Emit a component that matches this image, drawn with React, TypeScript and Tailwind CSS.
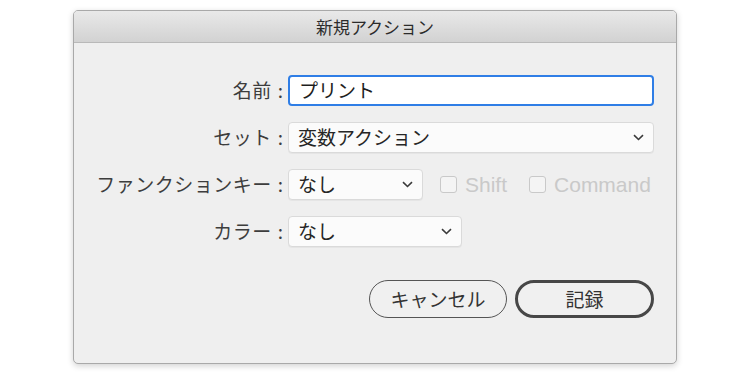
import React from "react";

const jp = "font-['Hiragino_Kaku_Gothic_ProN','Noto_Sans_CJK_JP',sans-serif]";

function Chevron() {
  return (
    <svg width="11" height="7" viewBox="0 0 11 7" className="shrink-0">
      <path d="M1 1.2 L5.5 5.5 L10 1.2" fill="none" stroke="#3a3a3a" strokeWidth="1.6" />
    </svg>
  );
}

function Select({ value, width }: { value: string; width: string }) {
  return (
    <div
      className={`${width} h-[31px] flex items-center justify-between pl-[9px] pr-[9px] bg-[#fbfbfb] border border-[#dadada] rounded-[4px] shadow-[0_1px_0_rgba(0,0,0,0.04)] text-[#262626]`}
    >
      <span>{value}</span>
      <Chevron />
    </div>
  );
}

function Row({ label, children }: { label: string; children: React.ReactNode }) {
  return (
    <div className="flex items-center">
      <div className="w-[214px] shrink-0 flex justify-end text-[#3d3d3d] pr-[5px] whitespace-nowrap">
        <span className="tracking-[0.5px]">{label}</span>
        <span className="ml-[6px]">:</span>
      </div>
      {children}
    </div>
  );
}

function Check({ label }: { label: string }) {
  return (
    <div className="flex items-center gap-[8px]">
      <div className="w-[17px] h-[17px] rounded-[3px] border border-[#c9c9c9] bg-[#f4f4f4]" />
      <span className="font-['Liberation_Sans',sans-serif] text-[21px] text-[#c9c9c9] leading-none">{label}</span>
    </div>
  );
}

export default function App() {
  return (
    <div className="w-[750px] h-[374px] bg-white pt-[10px]">
      <div className="mx-auto w-[604px] h-[354px] flex flex-col bg-[#efefef] border border-[#a9a9a9] rounded-[5px] shadow-[0_2px_6px_rgba(0,0,0,0.18)] overflow-hidden">
        {/* Title bar */}
        <div className={`${jp} h-[32px] shrink-0 flex items-center justify-center bg-gradient-to-b from-[#e9e9e9] to-[#d2d2d2] border-b border-[#b9b9b9] text-[17px] text-[#2b2b2b]`}>
          新規アクション
        </div>

        {/* Body */}
        <div className={`${jp} flex flex-col pt-[32px] pr-[22px] text-[19px]`}>
          <div className="flex flex-col gap-[16px]">
            <Row label="名前">
              <div className="flex-1 h-[31px] flex items-center pl-[9px] bg-white border-2 border-[#2f7ee6] rounded-[4px] text-[#1e1e1e]">
                プリント
              </div>
            </Row>
            <Row label="セット">
              <Select value="変数アクション" width="flex-1" />
            </Row>
            <Row label="ファンクションキー">
              <Select value="なし" width="w-[135px]" />
              <div className="flex items-center gap-[22px] ml-[17px]">
                <Check label="Shift" />
                <Check label="Command" />
              </div>
            </Row>
            <Row label="カラー">
              <Select value="なし" width="w-[174px]" />
            </Row>
          </div>

          <div className="flex justify-end gap-[8px] mt-[33px]">
            <button className="w-[138px] h-[38px] rounded-full border-[1.5px] border-[#555] bg-[#f0f0f0] text-[#333] text-[19px]">
              キャンセル
            </button>
            <button className="w-[139px] h-[38px] rounded-full border-[3px] border-[#474747] bg-[#f0f0f0] text-[#333] text-[19px]">
              記録
            </button>
          </div>
        </div>
      </div>
    </div>
  );
}
